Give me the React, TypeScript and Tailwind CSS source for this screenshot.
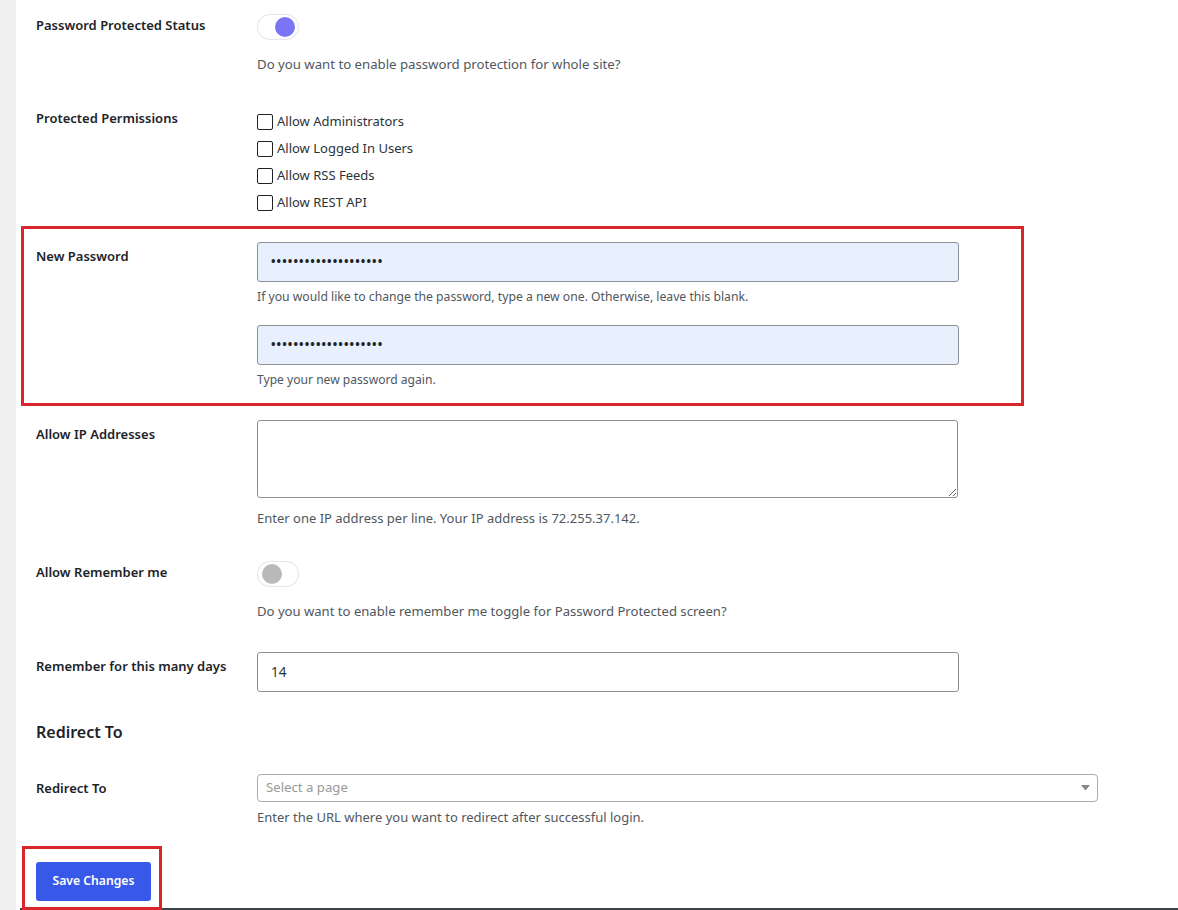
import React from "react";

const FONT = "font-['Noto_Sans',sans-serif]";

function Toggle({ on }: { on: boolean }) {
  return (
    <div className="flex h-[26px] w-[42px] items-center rounded-full border border-[#e6e6ea] bg-white px-[2px] shadow-[0_0_1px_rgba(0,0,0,0.05)]">
      {on ? (
        <div className="ml-auto mr-[1px] h-[20px] w-[20px] rounded-full bg-[#7b74f6]" />
      ) : (
        <div className="ml-[2px] h-[20px] w-[20px] rounded-full bg-[#b9b9b9]" />
      )}
    </div>
  );
}

function Checkbox({ label }: { label: string }) {
  return (
    <div className="flex h-[27px] items-center">
      <div className="h-[16px] w-[16px] rounded-[2px] border-[1.5px] border-[#1d2327] bg-white" />
      <span className="ml-[4px] text-[13px] text-[#2c3338]">{label}</span>
    </div>
  );
}

function Label({ children, pt }: { children: React.ReactNode; pt: string }) {
  return (
    <div className={`w-[221px] shrink-0 text-[13px] font-semibold leading-[20px] text-[#1d2327] ${pt}`}>
      {children}
    </div>
  );
}

function Desc({ children, mt, size }: { children: React.ReactNode; mt: string; size: string }) {
  return <p className={`leading-[20px] text-[#50575e] ${size} ${mt}`}>{children}</p>;
}

function PasswordBox() {
  return (
    <div className="flex h-[40px] w-[702px] items-center rounded-[3px] border border-[#8c8f94] bg-[#e8f0fe] pl-[13px]">
      <span className="text-[12px] font-bold tracking-[1.1px] text-[#1d2327]">••••••••••••••••••••</span>
    </div>
  );
}

export default function App() {
  return (
    <div className={`flex min-h-[910px] w-[1178px] bg-white ${FONT}`}>
      <div className="w-[16px] shrink-0 bg-[#f0f0f1]" />
      <div className="relative flex-1 pl-[20px]">
        {/* Row 1 */}
        <div className="flex pt-[14px]">
          <Label pt="pt-[1px]">Password Protected Status</Label>
          <div>
            <Toggle on />
            <Desc mt="mt-[14px]" size="text-[13.2px]">
              Do you want to enable password protection for whole site?
            </Desc>
          </div>
        </div>

        {/* Row 2 */}
        <div className="mt-[34px] flex">
          <Label pt="pt-0">Protected Permissions</Label>
          <div>
            <Checkbox label="Allow Administrators" />
            <Checkbox label="Allow Logged In Users" />
            <Checkbox label="Allow RSS Feeds" />
            <Checkbox label="Allow REST API" />
          </div>
        </div>

        {/* Row 3: new password (highlighted) */}
        <div className="relative mt-[26px] flex">
          <div className="pointer-events-none absolute left-[-15px] top-[-16px] h-[180px] w-[1003px] border-[3px] border-[#d9252b]" />
          <Label pt="pt-[4px]">New Password</Label>
          <div>
            <PasswordBox />
            <Desc mt="mt-[5px]" size="text-[12.2px]">
              If you would like to change the password, type a new one. Otherwise, leave this blank.
            </Desc>
            <div className="mt-[18px]">
              <PasswordBox />
            </div>
            <Desc mt="mt-[5px]" size="text-[12.1px]">
              Type your new password again.
            </Desc>
          </div>
        </div>

        {/* Row 4: IP */}
        <div className="mt-[30px] flex">
          <Label pt="pt-[4px]">Allow IP Addresses</Label>
          <div>
            <textarea
              readOnly
              className="block h-[78px] w-[701px] rounded-[3px] border border-[#8c8f94] bg-white"
            />
            <Desc mt="mt-[10px]" size="text-[13px]">
              Enter one IP address per line. Your IP address is 72.255.37.142.
            </Desc>
          </div>
        </div>

        {/* Row 5: remember me */}
        <div className="mt-[33px] flex">
          <Label pt="pt-[1px]">Allow Remember me</Label>
          <div>
            <Toggle on={false} />
            <Desc mt="mt-[14px]" size="text-[13.1px]">
              Do you want to enable remember me toggle for Password Protected screen?
            </Desc>
          </div>
        </div>

        {/* Row 6: days */}
        <div className="mt-[31px] flex">
          <Label pt="pt-[4px]">Remember for this many days</Label>
          <div className="flex h-[40px] w-[702px] items-center rounded-[3px] border border-[#8c8f94] bg-white pl-[13px]">
            <span className="text-[13.5px] text-[#2c3338]">14</span>
          </div>
        </div>

        {/* Heading */}
        <h2 className="mt-[28px] text-[16px] font-semibold leading-[24px] text-[#1d2327]">Redirect To</h2>

        {/* Row 7: redirect */}
        <div className="mt-[30px] flex">
          <Label pt="pt-[4px]">Redirect To</Label>
          <div>
            <div className="flex h-[28px] w-[841px] items-center justify-between rounded-[4px] border border-[#aaaaaa] bg-white pl-[8px] pr-[7px]">
              <span className="text-[13.2px] text-[#999999]">Select a page</span>
              <svg width="9" height="6" viewBox="0 0 9 6">
                <path d="M0 0 L9 0 L4.5 5.5 Z" fill="#888888" />
              </svg>
            </div>
            <Desc mt="mt-[5px]" size="text-[13px]">
              Enter the URL where you want to redirect after successful login.
            </Desc>
          </div>
        </div>

        {/* Save button */}
        <div className="relative mt-[35px] inline-block">
          <div className="pointer-events-none absolute left-[-14px] top-[-16px] h-[64px] w-[140px] border-[3px] border-[#d9252b]" />
          <button className="h-[39px] w-[115px] rounded-[3px] bg-[#3858e9] text-[12.2px] font-semibold text-white">
            Save Changes
          </button>
        </div>

        <div className="ml-[-16px] mt-[7px] h-[2px] bg-[#3c434a]" />
      </div>
    </div>
  );
}
